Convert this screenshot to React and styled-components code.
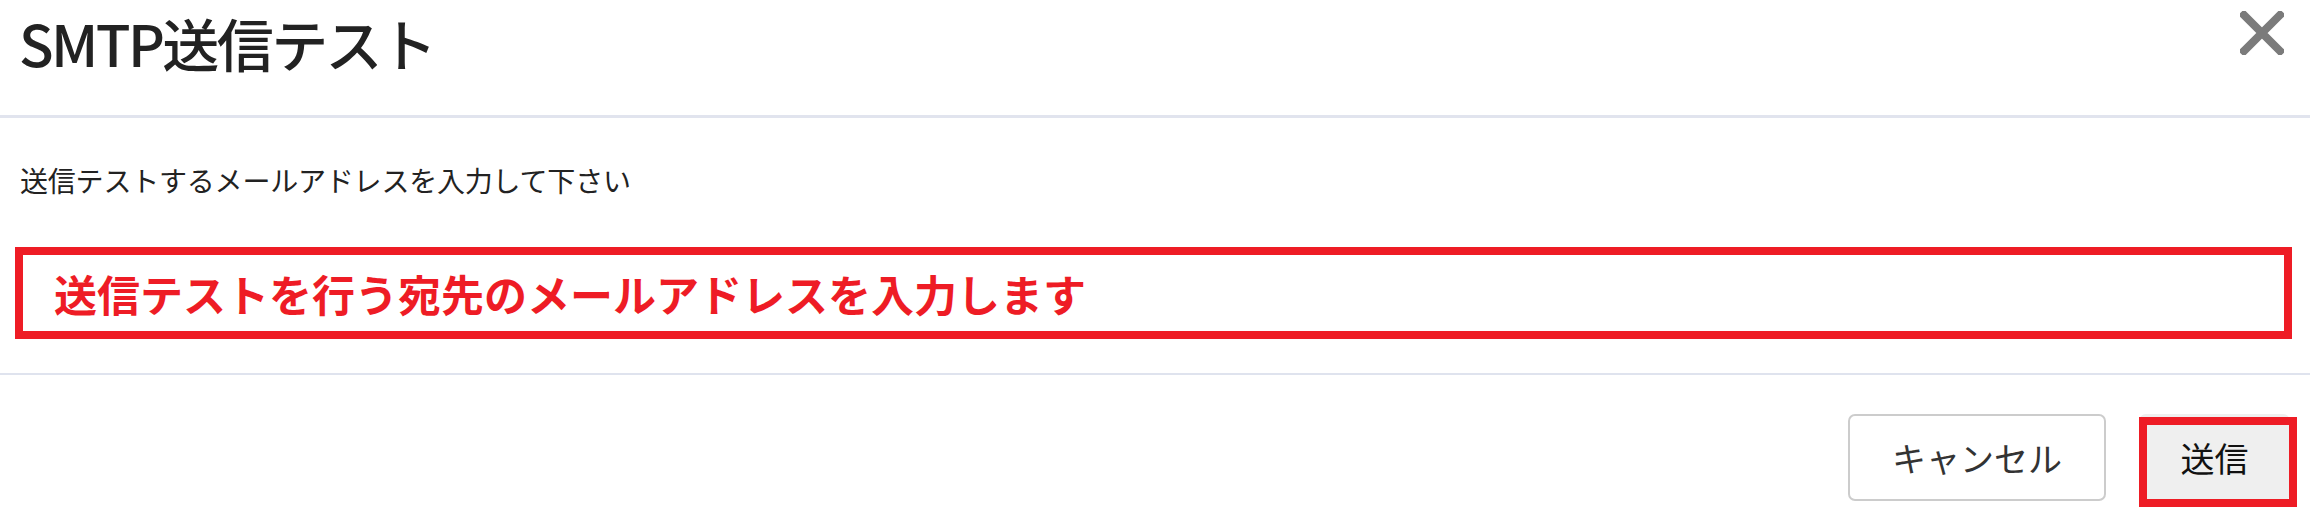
import React from 'react';
import styled, { createGlobalStyle } from 'styled-components';

const GlobalStyle = createGlobalStyle`
  html, body {
    margin: 0;
    padding: 0;
    background: #fff;
  }
  body {
    font-family: "Noto Sans CJK JP", "Noto Sans", sans-serif;
    color: #222;
  }
`;

const Modal = styled.div`
  width: 2310px;
  height: 520px;
  background: #fff;
  display: flex;
  flex-direction: column;
`;

const Header = styled.header`
  height: 115px;
  border-bottom: 3px solid #e1e4ee;
  display: flex;
  align-items: flex-start;
  justify-content: space-between;
  padding: 0 26px 0 19px;
  box-sizing: content-box;
`;

const Title = styled.h1`
  margin: 0;
  padding-top: 8px;
  font-size: 57px;
  line-height: 1.2;
  font-weight: 500;
  letter-spacing: -2.6px;
  color: #222;
`;

const CloseButton = styled.button`
  margin-top: 11px;
  padding: 0;
  border: 0;
  background: none;
  width: 44px;
  height: 44px;
  cursor: pointer;
  display: flex;
`;

const Body = styled.div`
  padding: 41px 18px 34px 15px;
  border-bottom: 2px solid #dfe3ee;
`;

const Message = styled.p`
  margin: 0 0 46px 5px;
  font-size: 28px;
  line-height: 42px;
  letter-spacing: -0.2px;
  color: #222;
`;

const InputFrame = styled.div`
  height: 76px;
  border: 8px solid #ee1c25;
  display: flex;
  align-items: center;
  padding-left: 31px;
`;

const Annotation = styled.span`
  font-size: 43px;
  font-weight: 700;
  color: #ee1c25;
  line-height: 1;
`;

const Footer = styled.footer`
  display: flex;
  justify-content: flex-end;
  gap: 33px;
  padding: 39px 20px 0 0;
`;

const Button = styled.button`
  height: 87px;
  width: ${(p) => p.$width}px;
  border-radius: 7px;
  font-family: inherit;
  font-size: 34px;
  color: ${(p) => (p.$primary ? '#111' : '#333')};
  background: ${(p) => (p.$primary ? '#efefef' : '#fff')};
  border: ${(p) => (p.$primary ? '0' : '2px solid #cccccc')};
  cursor: pointer;
`;

const Highlight = styled.div`
  position: relative;
`;

const HighlightFrame = styled.div`
  position: absolute;
  top: 3px;
  left: 0;
  right: -7px;
  bottom: -6px;
  border: 8px solid #ee1c25;
  pointer-events: none;
`;

const CloseIcon = () => (
  <svg width="44" height="44" viewBox="0 0 44 44">
    <path d="M4 4 L40 40 M40 4 L4 40" stroke="#7b7b7b" strokeWidth="8" strokeLinecap="square" />
  </svg>
);

export default function App() {
  return (
    <>
      <GlobalStyle />
      <Modal>
        <Header>
          <Title>SMTP送信テスト</Title>
          <CloseButton aria-label="閉じる">
            <CloseIcon />
          </CloseButton>
        </Header>
        <Body>
          <Message>送信テストするメールアドレスを入力して下さい</Message>
          <InputFrame>
            <Annotation>送信テストを行う宛先のメールアドレスを入力します</Annotation>
          </InputFrame>
        </Body>
        <Footer>
          <Button $width={258}>キャンセル</Button>
          <Highlight>
            <Button $primary $width={151}>送信</Button>
            <HighlightFrame />
          </Highlight>
        </Footer>
      </Modal>
    </>
  );
}
